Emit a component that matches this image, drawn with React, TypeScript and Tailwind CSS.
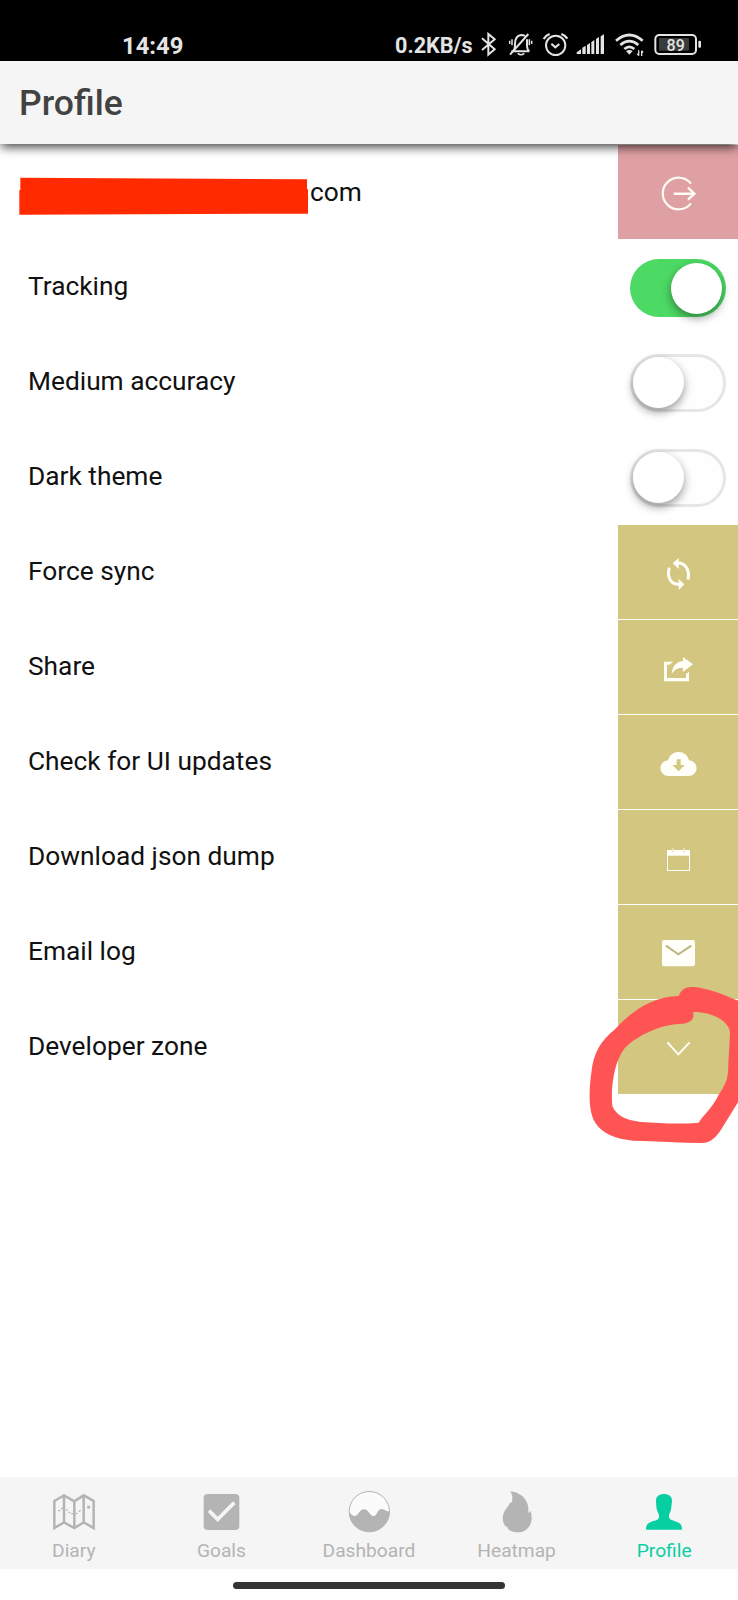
import type { ReactNode } from "react";

function StatusBar() {
  return (
    <div className="flex h-[61px] w-full shrink-0 bg-black text-[#e4e4e4]">
      <span className="ml-[122px] w-[273px] pt-[32.5px] text-[23.8px] leading-[26px] font-bold">14:49</span>
      <span className="w-[85px] pt-[32.5px] text-[21.6px] leading-[26px] font-bold whitespace-nowrap">0.2KB/s</span>
      <svg className="h-[61px] w-[27px] shrink-0" viewBox="300 -60 81 183" fill="none" stroke="currentColor" strokeWidth="6">
        <path d="M306 55 L344 88 L325 104 V42 L344 58 L306 90" />
      </svg>
      <svg className="h-[61px] w-[33px] shrink-0" viewBox="381 -60 99 183" fill="none" stroke="currentColor" strokeWidth="6">
        <path d="M394 94 H448 M400 92 Q405 88 405 72 C405 55 410 47 423 45 Q431 45 435 48 M441 58 V78 Q442 90 448 94" />
        <path d="M390 104 L445 42" />
        <path d="M413 100 Q423 108 433 100 M396 58 V76 M389 62 V72 M448 58 V76 M455 62 V72" strokeWidth="4.500" />
      </svg>
      <svg className="h-[61px] w-[34px] shrink-0" viewBox="480 -60 102 183" fill="none" stroke="currentColor" strokeWidth="6">
        <circle cx="527" cy="76" r="29" />
        <path d="M514 71 L526 82 L538 72" />
        <path d="M491 57 Q497 46 509 42 M544 42 Q556 46 562 56" strokeWidth="7" />
      </svg>
      <svg className="h-[61px] w-[36px] shrink-0" viewBox="582 -60 108 183" fill="currentColor">
        <path d="M590 102 V97 L603 88 V102Z M607 83 L617 77 V102 H607Z M621 75 L630 69 V102 H621Z M634 66 L643 60 V102 H634Z M648 57 L657 51 V102 H648Z M662 49 L672 43 V102 H662Z" />
      </svg>
      <svg className="h-[61px] w-[40px] shrink-0" viewBox="690 -60 120 183" fill="none" stroke="currentColor">
        <path d="M708 62 Q748 28 788 62 M721 75 Q748 52 775 75 M733 87 Q748 74 763 87" strokeWidth="8" />
        <path d="M738 93 Q748 87 758 93 L748 104Z" fill="currentColor" stroke="none" />
        <path d="M776 91 V107 M772 101 L776 107 M785 108 V92 M789 98 L785 92" strokeWidth="4" />
      </svg>
      <svg className="h-[61px] w-[55px] shrink-0" viewBox="810 -60 165 183">
        <rect x="826" y="45" width="122" height="57" rx="12" fill="black" stroke="currentColor" strokeWidth="6" />
        <rect x="837" y="54" width="90" height="38" rx="3" fill="#3b3b3b" />
        <rect x="955" y="62" width="8" height="21" rx="3" fill="currentColor" />
        <text x="887" y="93" textAnchor="middle" className="text-[48px] font-medium" fill="currentColor">89</text>
      </svg>
    </div>
  );
}

function Toggle({ on = false }: { on?: boolean }) {
  return on ? (
    <div className="mt-[20px] ml-[12px] flex h-[58px] w-[96px] items-center justify-end rounded-full bg-[#4cd964] pr-[4px]">
      <div className="h-[51px] w-[51px] rounded-full bg-white shadow-[0_4px_10px_rgba(0,0,0,0.4)]" />
    </div>
  ) : (
    <div className="mt-[20px] ml-[12px] flex h-[58px] w-[96px] items-center rounded-full border-[3px] border-[#e6e6e6] bg-[#fefefe]">
      <div className="mb-[1px] h-[51px] w-[51px] shrink-0 rounded-full bg-white shadow-[0_4px_10px_rgba(0,0,0,0.4)]" />
    </div>
  );
}

function Action({ viewBox, danger = false, children }: { viewBox: string; danger?: boolean; children: ReactNode }) {
  return (
    <div className={danger ? "mt-px h-[94px] w-[120px] bg-[#dfa0a3] text-[#fffaf4]" : "mt-px h-[94px] w-[120px] bg-[#d3c680] text-[#fffef8]"}>
      <svg className="h-[94px] w-[120px]" viewBox={viewBox} fill="currentColor">
        {children}
      </svg>
    </div>
  );
}

const rows: { label: string; control: ReactNode }[] = [
  { label: "Tracking", control: <Toggle on /> },
  { label: "Medium accuracy", control: <Toggle /> },
  { label: "Dark theme", control: <Toggle /> },
  {
    label: "Force sync",
    control: (
      <Action viewBox="54 15 360 282">
        <path d="M236 114 L218 130 L236 147Z M236 177 L253 193 L236 210Z" />
        <path d="M232 129 C257 128 270 151 264 179 M239 193 C211 195 200 169 208 143" fill="none" stroke="currentColor" strokeWidth="9" />
      </Action>
    ),
  },
  {
    label: "Share",
    control: (
      <Action viewBox="54 300 360 282">
        <path d="M192 425 H220 L208 434 H201 V474 H258 V462 L267 455 V484 H192Z" />
        <path d="M249 411 L279 433 L249 456 V444 C233 442 223 449 215 462 C217 440 228 425 249 423Z" />
      </Action>
    ),
  },
  {
    label: "Check for UI updates",
    control: (
      <Action viewBox="54 45 360 282">
        <path
          fillRule="evenodd"
          d="M205 228 A23 23 0 0 1 204 181 C209 165 220 156 236 156 C251 156 263 165 267 181 A23.500 23.500 0 0 1 266 228Z M230 178 V195 H217 L236 214 L254 195 H242 V178Z"
        />
      </Action>
    ),
  },
  {
    label: "Download json dump",
    control: (
      <Action viewBox="54 330 360 282">
        <path
          fillRule="evenodd"
          d="M201 450 H217 V457 H221 V450 H250 V457 H254 V450 H270 V513 H201Z M204 467 V510 H267 V467Z"
        />
        <path d="M217.500 445 H220.500 V456 H217.500Z M250.500 445 H253.500 V456 H250.500Z" />
      </Action>
    ),
  },
  {
    label: "Email log",
    control: (
      <Action viewBox="114 45 360 282">
        <rect x="246" y="150" width="99" height="79" rx="7" />
        <path d="M258 167 L295 193 L334 167" fill="none" stroke="#bdb77e" strokeWidth="6" />
      </Action>
    ),
  },
  {
    label: "Developer zone",
    control: (
      <Action viewBox="114 330 360 282">
        <path d="M262 457 L295 493 L329 457" fill="none" stroke="currentColor" strokeWidth="6" />
      </Action>
    ),
  },
];

const tabs: { label: string; viewBox: string; icon: ReactNode; active?: boolean }[] = [
  {
    label: "Diary",
    viewBox: "150 51 144 144",
    icon: (
      <g fill="none" stroke="currentColor">
        <path d="M163 93 L192 76 L223 94 L251 76 L281 93 V174 L251 157 L223 174 L192 157 L163 174Z M192 76 V157 M223 94 V174 M251 76 V157" strokeWidth="7.500" />
        <path d="M174 123 L181 121 M183 116 L189 113 M198 118 L203 122 M206 126 L211 129 M214 131 L221 132 M227 132 L233 129 M236 125 L242 121" strokeWidth="3.500" />
        <rect x="262" y="108" width="8" height="7" fill="currentColor" strokeWidth="1" />
      </g>
    ),
  },
  {
    label: "Goals",
    viewBox: "591 51 144 144",
    icon: (
      <>
        <rect x="611" y="72" width="107" height="108" rx="12" fill="currentColor" />
        <path d="M627 122 L653 148 L703 98" fill="none" stroke="#f5f5f5" strokeWidth="11" />
      </>
    ),
  },
  {
    label: "Dashboard",
    viewBox: "1035 51 144 144",
    icon: (
      <>
        <circle cx="1108" cy="125" r="60.500" fill="#fbfbfb" stroke="currentColor" strokeWidth="3" />
        <path
          d="M1047 125 C1056 137 1065 143 1074 132 C1081 120 1089 115 1098 119 C1109 125 1111 138 1121 138 C1132 138 1131 118 1144 117 C1154 116 1158 126 1169 124 A61 61 0 0 1 1047 125Z"
          fill="currentColor"
        />
      </>
    ),
  },
  {
    label: "Heatmap",
    viewBox: "369 51 144 144",
    icon: (
      <path
        d="M421 64 C445 66 469 82 474 107 Q476 118 475 129 Q479 128 482 122 C486 139 487 154 479 167 C469 183 456 187 441 187 C430 187 421 184 415 178 L411 168 L409 172 C395 156 396 137 404 123 C409 113 418 106 421 97 L425 98 C429 86 427 75 421 64Z"
        fill="currentColor"
      />
    ),
  },
  {
    label: "Profile",
    viewBox: "813 51 144 144",
    active: true,
    icon: (
      <path
        d="M885 72 C900 72 910 80 909 94 L907 110 C907 123 901 128 900 137 C899 148 906 150 916 153 C933 158 939 163 939 179 H831 C831 163 837 158 853 153 C865 150 871 148 870 137 C869 128 863 123 862 110 L861 94 C860 80 870 72 885 72Z"
        fill="currentColor"
      />
    ),
  },
];

export default function App() {
  return (
    <div className="relative flex h-[1600px] w-[738px] flex-col overflow-hidden bg-white font-[Roboto,sans-serif]">
      <StatusBar />
      <header className="z-10 h-[83px] shrink-0 bg-[#f5f5f5] pt-[21px] pl-[19px] shadow-[0_4px_10px_-1px_rgba(0,0,0,0.75)]">
        <h1 className="text-[35.5px] leading-[42px] font-medium text-[#424242]">Profile</h1>
      </header>
      <main className="flex flex-1 flex-col">
        <div className="flex h-[95px] justify-between">
          <div className="flex">
            <svg className="mt-[33px] ml-[19px] h-[38px] w-[291px]" viewBox="57 471 873 114">
              <path d="M61 473 L921 478 V507 L924 508 V581 L58 584 V510 H61Z" fill="#ff2a00" />
            </svg>
            <span className="pt-[33px] text-[26.3px] leading-[30px] text-[#111]">com</span>
          </div>
          <Action viewBox="54 15 360 282" danger>
            <g fill="none" stroke="currentColor">
              <path d="M273 131 A47.500 47.500 0 1 0 273 190" strokeWidth="6.500" />
              <path d="M221 161 H282 M264 143 L283 161 L264 179" strokeWidth="7.500" />
            </g>
          </Action>
        </div>
        {rows.map((row) => (
          <div key={row.label} className="flex h-[95px] justify-between">
            <span className="pt-[32px] pl-[28px] text-[26.3px] leading-[30px] text-[#111]">{row.label}</span>
            <div className="w-[120px]">{row.control}</div>
          </div>
        ))}
      </main>
      <nav className="flex h-[92px] shrink-0 bg-[#f5f5f5]">
        {tabs.map((tab) => (
          <div
            key={tab.label}
            className={tab.active ? "flex flex-1 flex-col items-center pt-[10px] text-[#08cfa2]" : "flex flex-1 flex-col items-center pt-[10px] text-[#b4b4b4]"}
          >
            <svg className="h-[48px] w-[48px]" viewBox={tab.viewBox}>
              {tab.icon}
            </svg>
            <span className="mt-[5px] text-[19.2px] leading-[22px]">{tab.label}</span>
          </div>
        ))}
      </nav>
      <div className="flex h-[31px] shrink-0 justify-center bg-[#fefefe] pt-[13px]">
        <div className="h-[7px] w-[272px] rounded-full bg-[#343434]" />
      </div>
      <svg className="absolute top-[890px] left-[580px] h-[260px] w-[158px]" viewBox="0 0 474 780">
        <path
          fillRule="evenodd"
          fill="#ff5454"
          d="M296 318 C304 297 317 289 342 291 C380 294 435 315 480 335 V627 L428 711 C409 744 391 758 366 759 C300 758 230 754 160 752 C105 748 65 730 45 697 C24 660 27 600 34 548 C40 490 60 455 105 418 C160 358 220 320 296 318Z M340 369 C343 387 333 397 311 401 C250 400 170 435 134 475 C104 512 91 590 97 648 C108 675 135 690 182 696 C240 700 300 703 356 698 C370 675 400 650 416 614 C443 575 445 555 445 521 L450 430 C451 395 396 365 340 366Z"
        />
      </svg>
    </div>
  );
}
